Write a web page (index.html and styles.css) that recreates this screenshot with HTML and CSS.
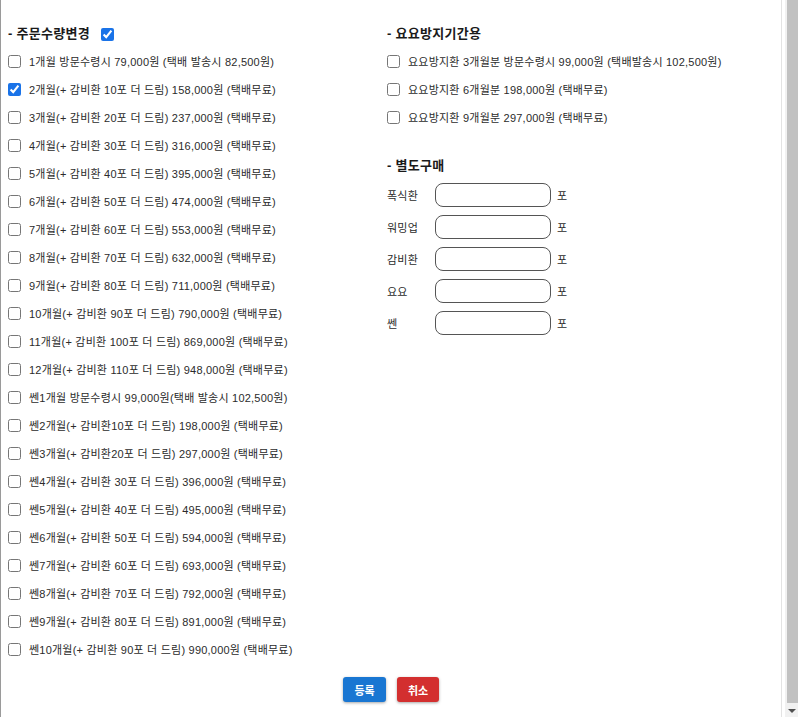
FILE: index.html
```html
<!DOCTYPE html>
<html lang="ko">
<head>
<meta charset="utf-8">
<title>주문수량변경</title>
<link rel="stylesheet" href="styles.css">
</head>
<body>
<div class="frame">
  <div class="content">
    <div class="cols">
      <section class="col col-left">
        <h3 class="heading">- 주문수량변경 <input type="checkbox" class="cb head-cb" checked></h3>
        <label class="row"><input type="checkbox" class="cb"><span>1개월 방문수령시 79,000원 (택배 발송시 82,500원)</span></label>
        <label class="row"><input type="checkbox" class="cb" checked><span>2개월(+ 감비환 10포 더 드림) 158,000원 (택배무료)</span></label>
        <label class="row"><input type="checkbox" class="cb"><span>3개월(+ 감비환 20포 더 드림) 237,000원 (택배무료)</span></label>
        <label class="row"><input type="checkbox" class="cb"><span>4개월(+ 감비환 30포 더 드림) 316,000원 (택배무료)</span></label>
        <label class="row"><input type="checkbox" class="cb"><span>5개월(+ 감비환 40포 더 드림) 395,000원 (택배무료)</span></label>
        <label class="row"><input type="checkbox" class="cb"><span>6개월(+ 감비환 50포 더 드림) 474,000원 (택배무료)</span></label>
        <label class="row"><input type="checkbox" class="cb"><span>7개월(+ 감비환 60포 더 드림) 553,000원 (택배무료)</span></label>
        <label class="row"><input type="checkbox" class="cb"><span>8개월(+ 감비환 70포 더 드림) 632,000원 (택배무료)</span></label>
        <label class="row"><input type="checkbox" class="cb"><span>9개월(+ 감비환 80포 더 드림) 711,000원 (택배무료)</span></label>
        <label class="row"><input type="checkbox" class="cb"><span>10개월(+ 감비환 90포 더 드림) 790,000원 (택배무료)</span></label>
        <label class="row"><input type="checkbox" class="cb"><span>11개월(+ 감비환 100포 더 드림) 869,000원 (택배무료)</span></label>
        <label class="row"><input type="checkbox" class="cb"><span>12개월(+ 감비환 110포 더 드림) 948,000원 (택배무료)</span></label>
        <label class="row"><input type="checkbox" class="cb"><span>쎈1개월 방문수령시 99,000원(택배 발송시 102,500원)</span></label>
        <label class="row"><input type="checkbox" class="cb"><span>쎈2개월(+ 감비환10포 더 드림) 198,000원 (택배무료)</span></label>
        <label class="row"><input type="checkbox" class="cb"><span>쎈3개월(+ 감비환20포 더 드림) 297,000원 (택배무료)</span></label>
        <label class="row"><input type="checkbox" class="cb"><span>쎈4개월(+ 감비환 30포 더 드림) 396,000원 (택배무료)</span></label>
        <label class="row"><input type="checkbox" class="cb"><span>쎈5개월(+ 감비환 40포 더 드림) 495,000원 (택배무료)</span></label>
        <label class="row"><input type="checkbox" class="cb"><span>쎈6개월(+ 감비환 50포 더 드림) 594,000원 (택배무료)</span></label>
        <label class="row"><input type="checkbox" class="cb"><span>쎈7개월(+ 감비환 60포 더 드림) 693,000원 (택배무료)</span></label>
        <label class="row"><input type="checkbox" class="cb"><span>쎈8개월(+ 감비환 70포 더 드림) 792,000원 (택배무료)</span></label>
        <label class="row"><input type="checkbox" class="cb"><span>쎈9개월(+ 감비환 80포 더 드림) 891,000원 (택배무료)</span></label>
        <label class="row"><input type="checkbox" class="cb"><span>쎈10개월(+ 감비환 90포 더 드림) 990,000원 (택배무료)</span></label>
      </section>
      <section class="col col-right">
        <h3 class="heading">- 요요방지기간용</h3>
        <label class="row"><input type="checkbox" class="cb"><span>요요방지환 3개월분 방문수령시 99,000원 (택배발송시 102,500원)</span></label>
        <label class="row"><input type="checkbox" class="cb"><span>요요방지환 6개월분 198,000원 (택배무료)</span></label>
        <label class="row"><input type="checkbox" class="cb"><span>요요방지환 9개월분 297,000원 (택배무료)</span></label>

        <h3 class="heading heading-extra">- 별도구매</h3>
        <div class="field"><span class="field-label">폭식환</span><input type="text" class="field-input"><span class="unit">포</span></div>
        <div class="field"><span class="field-label">워밍업</span><input type="text" class="field-input"><span class="unit">포</span></div>
        <div class="field"><span class="field-label">감비환</span><input type="text" class="field-input"><span class="unit">포</span></div>
        <div class="field"><span class="field-label">요요</span><input type="text" class="field-input"><span class="unit">포</span></div>
        <div class="field"><span class="field-label">쎈</span><input type="text" class="field-input"><span class="unit">포</span></div>
      </section>
    </div>
    <div class="actions">
      <button class="btn btn-primary">등록</button>
      <button class="btn btn-danger">취소</button>
    </div>
  </div>
  <div class="scrollbar">
    <div class="thumb"></div>
    <div class="arrow"></div>
  </div>
</div>
</body>
</html>
```

FILE: styles.css
```css
html, body {
  margin: 0;
  padding: 0;
  background: #ffffff;
  overflow: hidden;
}

body {
  font-family: "Liberation Sans", "Noto Sans CJK KR", sans-serif;
  font-size: 11px;
  color: #2b2b2b;
}

.frame {
  position: relative;
  width: 798px;
  height: 717px;
  display: flex;
}

.content {
  border-left: 1px solid #9a9a9a;
  border-right: 1px solid #e3e3e3;
  box-sizing: border-box;
  width: 782px;
  padding: 24px 0 0 7px;
}

.cols {
  display: grid;
  grid-template-columns: 379px 1fr;
}

.col {
  display: flex;
  flex-direction: column;
}

.heading {
  margin: 0 0 3px 0;
  height: 20px;
  line-height: 20px;
  font-size: 13px;
  font-weight: bold;
  color: #1a1a1a;
  letter-spacing: 0.3px;
  display: flex;
  align-items: center;
  white-space: pre;
}

.heading-extra {
  margin-top: 25px;
}

.cb {
  width: 13px;
  height: 13px;
  margin: 0 8px 0 0;
  flex: none;
  accent-color: #1a73e8;
}

.head-cb {
  margin: 0 0 0 7px;
}

.row {
  height: 28px;
  display: flex;
  align-items: center;
  white-space: nowrap;
  letter-spacing: 0.22px;
}

.field {
  height: 32px;
  display: flex;
  align-items: center;
  letter-spacing: 0.2px;
}

.field-label {
  width: 48px;
  flex: none;
}

.field-input {
  width: 116px;
  height: 24px;
  box-sizing: border-box;
  border: 1px solid #555555;
  border-radius: 8px;
  margin: 0 6px 0 0;
  padding: 0 6px;
  background: #ffffff;
}

.actions {
  display: flex;
  justify-content: center;
  gap: 11px;
  margin-top: 14px;
  padding-right: 7px;
}

.btn {
  height: 25px;
  width: 43px;
  border: none;
  border-radius: 3px;
  color: #ffffff;
  font-family: "Liberation Sans", "Noto Sans CJK KR", sans-serif;
  font-size: 11px;
  font-weight: bold;
  box-shadow: 0 1px 3px rgba(0, 0, 0, 0.35);
  padding: 0;
}

.btn-primary {
  background: #1976d2;
}

.btn-danger {
  background: #d32f2f;
  width: 42px;
}

.scrollbar {
  position: absolute;
  top: 0;
  right: 0;
  width: 13px;
  height: 717px;
  background: #f1f1f1;
}

.thumb {
  position: absolute;
  top: 0;
  right: 0;
  width: 11px;
  height: 703px;
  background: #c1c1c1;
}

.arrow {
  position: absolute;
  right: 2px;
  bottom: 4px;
  width: 0;
  height: 0;
  border-left: 4px solid transparent;
  border-right: 4px solid transparent;
  border-top: 4px solid #505050;
}
```
